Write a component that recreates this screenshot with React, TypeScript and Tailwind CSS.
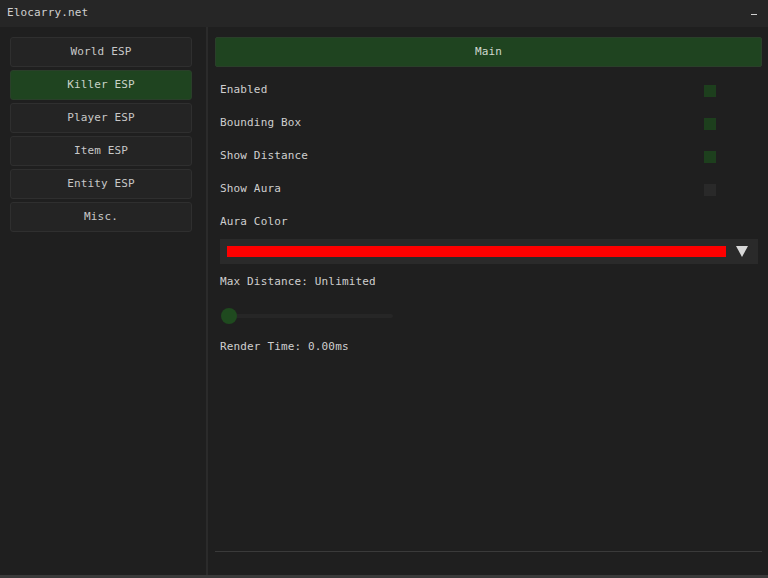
import React from "react";

const font = { fontFamily: '"DejaVu Sans Mono", "Liberation Mono", monospace', letterSpacing: "0.15px" };

function SideButton({ label, active }: { label: string; active?: boolean }) {
  return (
    <div
      className={
        "h-[30px] flex items-center justify-center rounded-[3px] border text-[11px] " +
        (active
          ? "bg-[#1f4420] border-[#2a3f2a] text-[#c9d3c9]"
          : "bg-[#242424] border-[#2f2f2f] text-[#c8c8c8]")
      }
    >
      {label}
    </div>
  );
}

function CheckRow({ label, checked }: { label: string; checked: boolean }) {
  return (
    <div className="h-[33px] flex items-center justify-between pl-[5px] pr-[46px]">
      <span>{label}</span>
      <div
        className={
          "w-[12px] h-[12px] " + (checked ? "bg-[#1d3f1d]" : "bg-[#292929]")
        }
      />
    </div>
  );
}

export default function App() {
  return (
    <div
      className="w-[768px] h-[578px] bg-[#1f1f1f] text-[#cfcfcf] text-[11px] flex flex-col overflow-hidden"
      style={font}
    >
      <div className="h-[27px] bg-[#262626] flex items-center justify-between pl-[7px] pr-[11px] shrink-0">
        <span className="text-[#d0d0d0]">Elocarry.net</span>
        <span className="w-[6px] h-[1px] bg-[#d0d0d0] mt-[1px]" />
      </div>
      <div className="flex flex-1 min-h-0">
        <div className="w-[206px] pl-[10px] pr-[14px] pt-[10px] flex flex-col gap-[3px] shrink-0">
          <SideButton label="World ESP" />
          <SideButton label="Killer ESP" active />
          <SideButton label="Player ESP" />
          <SideButton label="Item ESP" />
          <SideButton label="Entity ESP" />
          <SideButton label="Misc." />
        </div>
        <div className="w-[2px] bg-[#2b2b2b] shrink-0" />
        <div className="flex-1 flex flex-col pl-[7px] pr-[6px] pt-[10px] pb-[3px]">
          <div className="h-[30px] bg-[#1f4420] border border-[#2a3f2a] rounded-[2px] flex items-center justify-center text-[#cfd8cf]">
            Main
          </div>
          <div className="mt-[7px]">
            <CheckRow label="Enabled" checked />
            <CheckRow label="Bounding Box" checked />
            <CheckRow label="Show Distance" checked />
            <CheckRow label="Show Aura" checked={false} />
            <div className="h-[33px] flex items-center pl-[5px]">Aura Color</div>
          </div>
          <div className="ml-[5px] mr-[4px] h-[25px] bg-[#2a2a2a] flex items-center pl-[7px] pr-[10px]">
            <div className="flex-1 h-[11px] bg-[#ff0000]" />
            <svg width="12" height="11" viewBox="0 0 12 11" className="ml-[10px]">
              <polygon points="0,0 12,0 6,11" fill="#d8d8d8" />
            </svg>
          </div>
          <div className="h-[35px] flex items-center pl-[5px] mt-[1px]">Max Distance: Unlimited</div>
          <div className="h-[31px] flex items-center pl-[7px]">
            <div className="relative w-[171px] h-[4px] bg-[#262626] rounded-full">
              <div className="absolute left-[-1px] top-[-6px] w-[16px] h-[16px] rounded-full bg-[#1f4a1f]" />
            </div>
          </div>
          <div className="h-[33px] flex items-center pl-[5px]">Render Time: 0.00ms</div>
          <div className="flex-1" />
          <div className="h-[1px] bg-[#3a3a3a] mb-[20px]" />
        </div>
      </div>
      <div className="h-[3px] bg-[#3a3a3a] shrink-0" />
    </div>
  );
}
